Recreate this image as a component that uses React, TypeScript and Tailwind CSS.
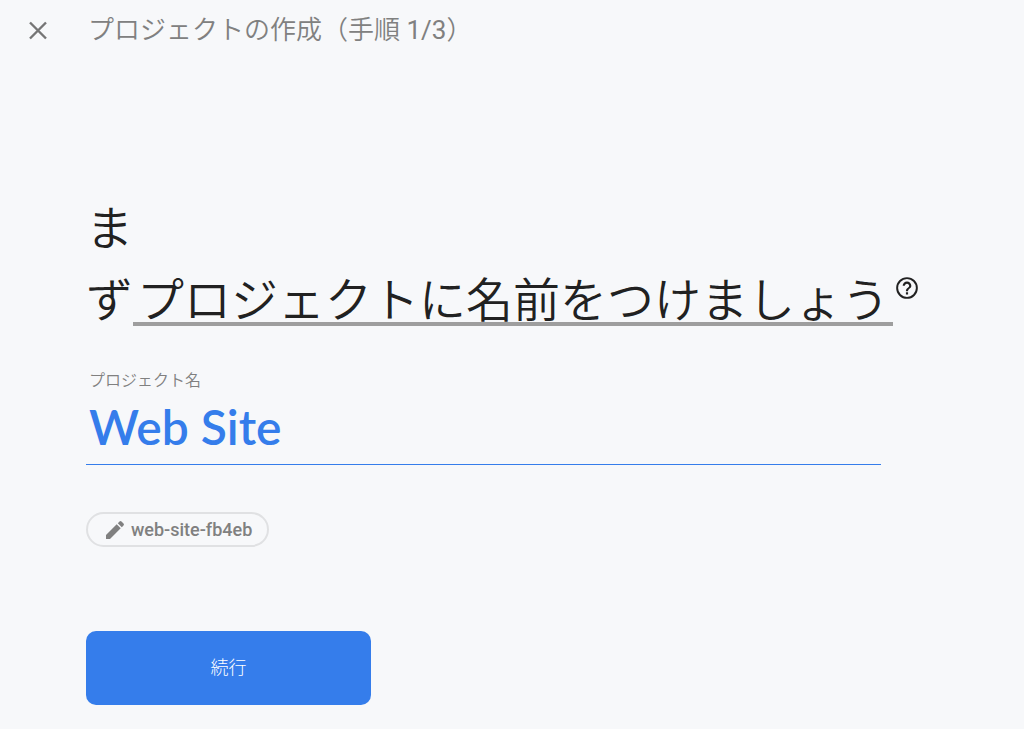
import { useState } from 'react';

export default function App() {
  const [name, setName] = useState('Web Site');
  return (
    <div className="min-h-screen bg-[#f7f8fa] font-['Roboto','Noto_Sans_CJK_JP',sans-serif] text-[#212121]">
      <header className="flex h-15 items-center gap-10 pl-7">
        <button type="button" aria-label="閉じる" className="size-5 text-[#757575]">
          <svg viewBox="0 0 20 20" className="size-5" fill="none" stroke="currentColor" strokeWidth="2.4">
            <path d="M2 2.500 18 18.500M18 2.500 2 18.500" />
          </svg>
        </button>
        <span className="text-[26px] leading-8 text-[#808080]">
          <span className="font-[350]">プロジェクトの作成（手順</span> 1/3<span className="font-[350]">）</span>
        </span>
      </header>
      <main className="px-[86px] pt-[133px]">
        <h1 className="text-[47px] leading-[72px] font-[350]">
          <span className="block">ま</span>
          <span className="flex items-start whitespace-nowrap">
            ず<span className="h-[61px] border-b-4 border-[#9e9e9e] px-1 leading-[72px]">プロジェクトに名前をつけましょう</span>
            <button type="button" aria-label="ヘルプ" className="mt-[9px] size-7 pl-px">
              <svg viewBox="0 0 24 24" className="size-[26px]" fill="currentColor">
                <path d="M11 16h2v2h-2zM12 2a10 10 0 1 0 0 20 10 10 0 0 0 0-20m0 18.200a8.200 8.200 0 1 1 0-16.400 8.200 8.200 0 0 1 0 16.400M12 6a4 4 0 0 0-4 4h2c0-1.100.9-2 2-2s2 .9 2 2c0 2-3 1.750-3 5h2c0-2.250 3-2.500 3-5a4 4 0 0 0-4-4" />
              </svg>
            </button>
          </span>
        </h1>
        <form onSubmit={(e) => e.preventDefault()}>
          <label htmlFor="project-name" className="mt-8 block pl-[3px] text-base leading-6 font-[350] text-[#808080]">プロジェクト名</label>
          <div className="max-w-[795px] border-b border-[#357deb]">
            <input id="project-name" value={name} onChange={(e) => setName(e.target.value)} className="block h-[71px] w-full bg-transparent pb-1 pl-[3px] font-['Lato',sans-serif] text-[48px] font-semibold text-[#357deb] outline-none" />
          </div>
          <button type="button" className="mt-[47px] flex h-[35px] items-center gap-1 rounded-full border-2 border-[#e0e1e3] px-[15px] text-lg font-medium text-[#808080]">
            <svg viewBox="0 0 24 24" className="size-6" fill="currentColor">
              <path d="M3 17v4h4L17.700 10.300l-4-4L3 17zM20.500 7.500a1.400 1.400 0 0 0 0-2l-2-2a1.400 1.400 0 0 0-2 0l-1.700 1.700 4 4 1.700-1.700z" />
            </svg>
            web-site-fb4eb
          </button>
          <button type="submit" className="mt-21 h-[74px] w-[285px] rounded-[10px] bg-[#357deb] text-lg font-light text-white">続行</button>
        </form>
      </main>
    </div>
  );
}
